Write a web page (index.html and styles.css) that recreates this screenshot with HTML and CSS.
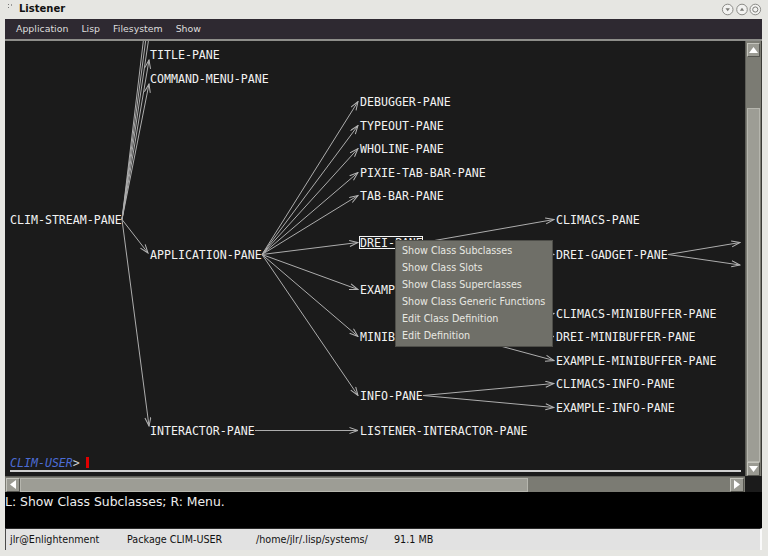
FILE: index.html
```html
<!DOCTYPE html>
<html>
<head>
<meta charset="utf-8">
<title>Listener</title>
<link rel="stylesheet" href="styles.css">
</head>
<body>
<div class="window">
  <div class="titlebar">
    <svg class="ticon" width="5" height="6" viewBox="0 0 5 6"><rect x="0" y="0" width="1" height="1" fill="#777"/><rect x="0" y="3" width="1" height="1" fill="#777"/><rect x="3" y="0" width="1" height="2" fill="#999"/></svg>
    <span class="title">Listener</span>
    <svg class="wbtns" width="41" height="14" viewBox="0 0 41 14">
      <circle cx="6.7" cy="7.5" r="5.3" fill="#f2f2f0" stroke="#8c8c88"/>
      <path d="M4.5 6.2 L8.9 6.2 L6.7 9.2 Z" fill="#7a7a76"/>
      <circle cx="21" cy="7.5" r="5.3" fill="#f2f2f0" stroke="#8c8c88"/>
      <path d="M18.8 8.8 L23.2 8.8 L21 5.8 Z" fill="#7a7a76"/>
      <circle cx="34.3" cy="7.5" r="5.3" fill="#f2f2f0" stroke="#8c8c88"/>
      <circle cx="34.3" cy="7.5" r="2.6" fill="none" stroke="#7a7a76"/>
    </svg>
  </div>
  <div class="menubar">
    <span>Application</span>
    <span>Lisp</span>
    <span>Filesystem</span>
    <span>Show</span>
  </div>
  <div class="main">
    <div class="viewport">
      <svg class="graph" width="740" height="411" viewBox="5 41 740 411">
        <defs>
          <marker id="ah" markerUnits="userSpaceOnUse" markerWidth="10" markerHeight="8" refX="9" refY="3.5" orient="auto">
            <path d="M0.5 0.5 L9 3.5 L0.5 6.5" fill="none" stroke="#b4b4b4" stroke-width="1"/>
          </marker>
        </defs>
        <g class="edges" stroke="#adadad" stroke-width="1" fill="none" marker-end="url(#ah)">
          <line x1="122" y1="219.5" x2="150" y2="30"/>
          <line x1="122" y1="219.5" x2="150" y2="8"/>
          <line x1="122" y1="219.5" x2="150" y2="-15"/>
          <line x1="122" y1="219.5" x2="149" y2="60"/>
          <line x1="122" y1="219.5" x2="149" y2="84"/>
          <line x1="122" y1="219.5" x2="148" y2="253"/>
          <line x1="122" y1="219.5" x2="149" y2="426"/>

          <line x1="262" y1="254.5" x2="358" y2="101.5"/>
          <line x1="262" y1="254.5" x2="358" y2="125.5"/>
          <line x1="262" y1="254.5" x2="358" y2="148.5"/>
          <line x1="262" y1="254.5" x2="358" y2="172.5"/>
          <line x1="262" y1="254.5" x2="358" y2="195.5"/>
          <line x1="262" y1="254.5" x2="358" y2="242.5"/>
          <line x1="262" y1="254.5" x2="358" y2="289.5"/>
          <line x1="262" y1="254.5" x2="358" y2="336.5"/>
          <line x1="262" y1="254.5" x2="358" y2="395.5"/>

          <line x1="423" y1="242.5" x2="554" y2="219.5"/>
          <line x1="423" y1="242.5" x2="554" y2="254.5"/>
          <line x1="465" y1="336.5" x2="554" y2="313.5"/>
          <line x1="465" y1="336.5" x2="554" y2="336.5"/>
          <line x1="465" y1="336.5" x2="554" y2="360.5"/>
          <line x1="423" y1="395.5" x2="554" y2="383.5"/>
          <line x1="423" y1="395.5" x2="554" y2="407.5"/>
          <line x1="255" y1="430.5" x2="358" y2="430.5"/>
          <line x1="668" y1="254.5" x2="740" y2="242.5"/>
          <line x1="668" y1="254.5" x2="740" y2="265"/>
        </g>
        <rect x="359.5" y="236.5" width="63" height="12" fill="none" stroke="#f4f4f4" stroke-width="1"/>
        <g class="nodes">
          <text x="150" y="59">TITLE-PANE</text>
          <text x="150" y="83">COMMAND-MENU-PANE</text>
          <text x="10" y="224">CLIM-STREAM-PANE</text>
          <text x="150" y="259">APPLICATION-PANE</text>
          <text x="150" y="435">INTERACTOR-PANE</text>
          <text x="360" y="106">DEBUGGER-PANE</text>
          <text x="360" y="130">TYPEOUT-PANE</text>
          <text x="360" y="153">WHOLINE-PANE</text>
          <text x="360" y="177">PIXIE-TAB-BAR-PANE</text>
          <text x="360" y="200">TAB-BAR-PANE</text>
          <text x="360" y="247">DREI-PANE</text>
          <text x="360" y="294">EXAMPLE-PANE</text>
          <text x="360" y="341">MINIBUFFER-PANE</text>
          <text x="360" y="400">INFO-PANE</text>
          <text x="360" y="435">LISTENER-INTERACTOR-PANE</text>
          <text x="556" y="224">CLIMACS-PANE</text>
          <text x="556" y="259">DREI-GADGET-PANE</text>
          <text x="556" y="318">CLIMACS-MINIBUFFER-PANE</text>
          <text x="556" y="341">DREI-MINIBUFFER-PANE</text>
          <text x="556" y="365">EXAMPLE-MINIBUFFER-PANE</text>
          <text x="556" y="388">CLIMACS-INFO-PANE</text>
          <text x="556" y="412">EXAMPLE-INFO-PANE</text>
        </g>
      </svg>
      <div class="prompt">
        <span class="pkg">CLIM-USER</span><span class="gt">&gt;</span><span class="cursor"></span>
      </div>
      <div class="popup">
        <div class="item">Show Class Subclasses</div>
        <div class="item">Show Class Slots</div>
        <div class="item">Show Class Superclasses</div>
        <div class="item">Show Class Generic Functions</div>
        <div class="item">Edit Class Definition</div>
        <div class="item">Edit Definition</div>
      </div>
    </div>
    <div class="vscroll">
      <div class="sbtn"><svg width="9" height="6" viewBox="0 0 9 6"><path d="M0 6 L4.5 0 L9 6 Z" fill="#fff"/></svg></div>
      <div class="vtrack"><div class="vthumb"></div></div>
      <div class="sbtn"><svg width="9" height="6" viewBox="0 0 9 6"><path d="M0 0 L4.5 6 L9 0 Z" fill="#fff"/></svg></div>
    </div>
  </div>
  <div class="hrow">
    <div class="hscroll">
      <div class="sbtn h"><svg width="6" height="9" viewBox="0 0 6 9"><path d="M6 0 L0 4.5 L6 9 Z" fill="#fff"/></svg></div>
      <div class="htrack"><div class="hthumb"></div></div>
      <div class="sbtn h"><svg width="6" height="9" viewBox="0 0 6 9"><path d="M0 0 L6 4.5 L0 9 Z" fill="#fff"/></svg></div>
    </div>
    <div class="corner"></div>
  </div>
  <div class="pointerdoc">L: Show Class Subclasses; R: Menu.</div>
  <div class="status">
    <span>jlr@Enlightenment</span>
    <span>Package CLIM-USER</span>
    <span>/home/jlr/.lisp/systems/</span>
    <span>91.1 MB</span>
  </div>
</div>
</body>
</html>
```

FILE: styles.css
```css
* { box-sizing: border-box; }
html, body { margin: 0; padding: 0; }
body {
  width: 768px;
  height: 556px;
  overflow: hidden;
  background: #e6e6e2;
  font-family: "DejaVu Sans", sans-serif;
}
.window {
  width: 768px;
  height: 556px;
  display: flex;
  flex-direction: column;
  background: #e6e6e2;
  padding: 0 6px 6px 5px;
}
.titlebar {
  height: 19px;
  flex: none;
  display: flex;
  align-items: center;
}
.ticon { margin-left: 3px; margin-top: -6px; }
.title {
  margin-left: 6px;
  font-weight: bold;
  font-size: 10px;
  color: #111;
  margin-top: -2px;
}
.wbtns { margin-left: auto; margin-top: -2px; }
.menubar {
  height: 22px;
  flex: none;
  background: #2e2931;
  border-bottom: 2px solid #8e8e8a;
  display: flex;
  align-items: center;
  gap: 13px;
  padding-left: 11px;
  padding-bottom: 1px;
  color: #dedede;
  font-size: 9.4px;
}
.main {
  height: 435px;
  flex: none;
  display: flex;
  background: #1b1b1b;
}
.viewport {
  width: 740px;
  position: relative;
  display: flex;
  flex-direction: column;
  background: #1b1b1b;
}
.graph { display: block; flex: none; }
.graph text {
  font-family: "DejaVu Sans Mono", monospace;
  font-size: 11.6px;
  fill: #f2f2f2;
}
.prompt {
  height: 20px;
  margin: 0 4px 4px 5px;
  padding-top: 3px;
  border-bottom: 2px solid #cfcfcf;
  display: flex;
  align-items: center;
  font-family: "DejaVu Sans Mono", monospace;
  font-size: 11.6px;
}
.pkg { color: #4c6cd4; font-style: italic; }
.gt { color: #cfcfcf; }
.cursor {
  width: 3px;
  height: 11px;
  background: #e10000;
  margin-left: 6px;
}
.popup {
  position: absolute;
  left: 390px;
  top: 199px;
  width: 158px;
  height: 107px;
  background: #6f6f68;
  border: 1px solid #4e4e49;
  padding-top: 1px;
}
.popup .item {
  height: 17px;
  line-height: 17px;
  padding-left: 6px;
  font-size: 9.6px;
  color: #e8e8e2;
  white-space: nowrap;
}
.vscroll {
  width: 17px;
  display: flex;
  flex-direction: column;
  background: #7b7b73;
  border-left: 1px solid #5e5e58;
  border-right: 1px solid #3a3a36;
  padding: 2px 1px 0 1px;
}
.sbtn {
  flex: none;
  height: 14px;
  background: #9a9a92;
  border: 1px solid;
  border-color: #c4c4bc #55554f #55554f #c4c4bc;
  display: flex;
  align-items: center;
  justify-content: center;
}
.sbtn.h { width: 14px; height: 14px; }
.vtrack {
  flex: 1;
  display: flex;
  flex-direction: column;
  padding-top: 51px;
}
.vthumb {
  flex: 1;
  background: #9d9d95;
  border: 1px solid #b6b6ae;
}
.hrow {
  height: 16px;
  flex: none;
  display: flex;
  background: #1b1b1b;
}
.hscroll {
  width: 740px;
  display: flex;
  align-items: center;
  background: #7b7b73;
  border-top: 1px solid #5e5e58;
  padding: 0 1px;
}
.htrack {
  flex: 1;
  height: 14px;
  display: flex;
}
.hthumb {
  width: 508px;
  background: #9d9d95;
  border: 1px solid #b6b6ae;
}
.corner { flex: 1; background: #1b1b1b; }
.pointerdoc {
  height: 36px;
  flex: none;
  background: #000;
  color: #eeeeee;
  font-size: 12.4px;
  line-height: 14px;
  padding-top: 3px;
  white-space: nowrap;
}
.status {
  height: 22px;
  flex: none;
  background: #e2e2e2;
  border-top: 1px solid #2a2a2a;
  border-left: 1px solid #4a4a4a;
  border-right: 2px solid #fafafa;
  display: grid;
  grid-template-columns: 117px 129px 138px 1fr;
  align-items: center;
  padding-left: 4px;
  font-size: 9.6px;
  color: #111;
  white-space: nowrap;
}
```
